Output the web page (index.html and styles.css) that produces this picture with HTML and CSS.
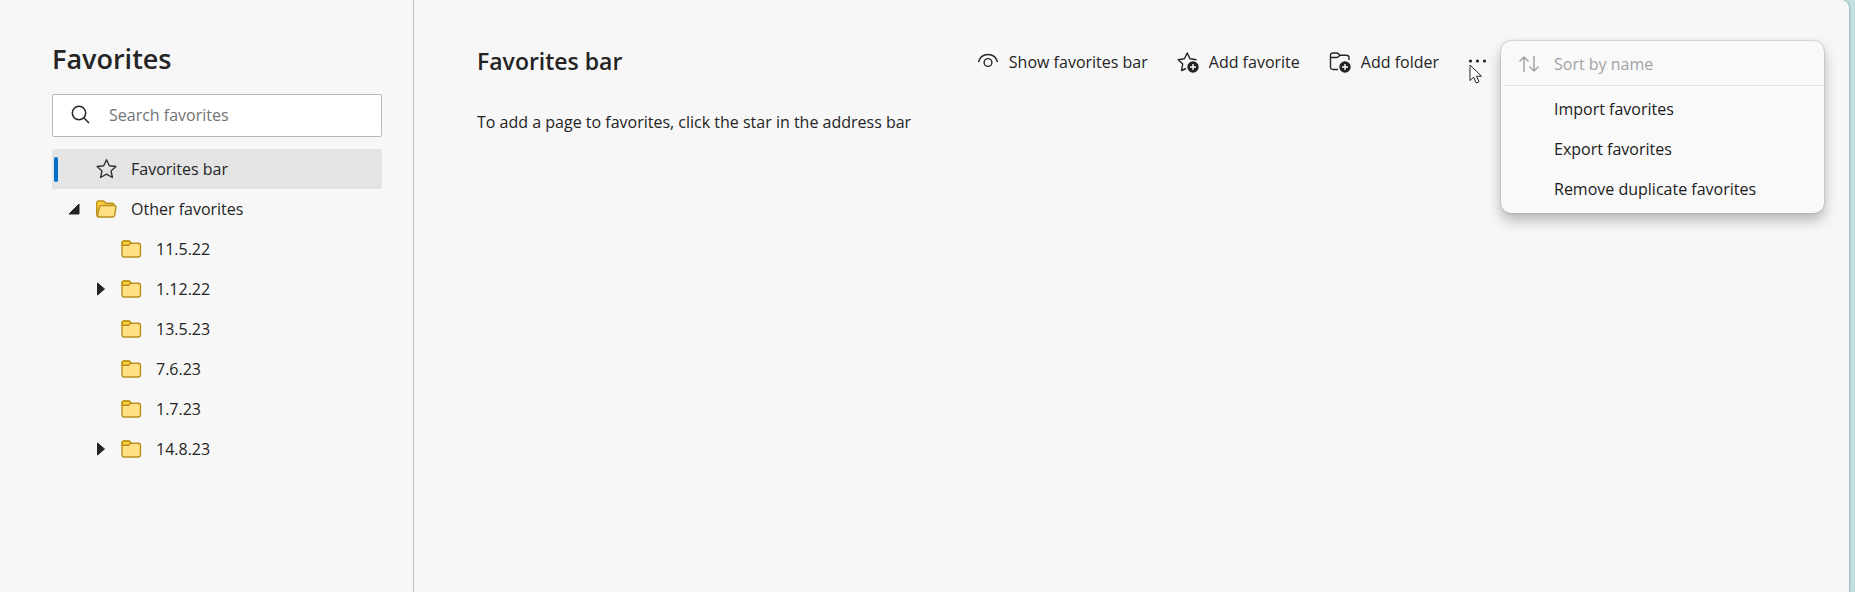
FILE: index.html
```html
<!DOCTYPE html>
<html lang="en">
<head>
<meta charset="utf-8">
<title>Favorites</title>
<link rel="stylesheet" href="styles.css">
</head>
<body>

<!-- shared icons -->
<svg class="sprite" aria-hidden="true">
  <symbol id="folder" viewBox="0 0 22 20">
    <path d="M2 4.500Q2 2 4.500 2H8q1.200 0 2 .8l1.300 1.400H18q2.500 0 2.500 2.500V15.500q0 2.500-2.500 2.500H4.500Q2 18 2 15.500z" fill="#ffe083" stroke="#b8901c" stroke-width="1.400"/>
    <path d="M2 6.200V4.500Q2 2 4.500 2H8q1.200 0 2 .8l.9 1-1.300 1.500q-.7.900-2 .9z" fill="#ffcd3c" stroke="#b8901c" stroke-width="1.400" stroke-linejoin="round"/>
  </symbol>
  <symbol id="plus" viewBox="0 0 12 12">
    <circle cx="6" cy="6" r="5.700" fill="#222" stroke="none"/>
    <path d="M6 3v6M3 6h6" stroke="#fff" stroke-width="1.400"/>
  </symbol>
</svg>

<div class="page">
<aside class="sidebar">
  <h1>Favorites</h1>
  <label class="search">
    <svg width="20" height="20" viewBox="0 0 20 20"><circle cx="8" cy="8" r="6.700"/><path d="M12.800 12.800L18 18"/></svg>
    <input type="search" placeholder="Search favorites" aria-label="Search favorites">
  </label>

  <ul class="tree">
    <li><button class="row selected">
      <span class="arrow"></span>
      <svg class="star" width="22" height="22" viewBox="0 0 22 22"><path d="M11.500 1.700l2.800 6 6.600.8-4.900 4.400 1.400 6.600-5.900-3.300-5.900 3.300 1.400-6.600-4.900-4.400 6.600-.8z"/></svg>
      Favorites bar
    </button></li>
    <li><button class="row">
      <span class="arrow"><svg width="12" height="12" viewBox="0 0 12 12"><path d="M11 1v10H1z"/></svg></span>
      <svg width="22" height="20" viewBox="0 0 22 20" fill="#ffcd3c" stroke="#b8901c" stroke-width="1.400" stroke-linejoin="round"><path d="M3.700 18Q1.700 17.500 1.700 15.500V4.500Q1.700 2 4 2h3.700q1 0 1.700.7l1.500 1.500h6.200q2 0 2 2.300"/><path d="M7 6.500h12.300q1.900 0 1.600 1.900l-1.200 7.700q-.3 1.900-2.200 1.900H3.700q-1.400-.1-1.100-1.700L4.400 8.200q.3-1.700 2.600-1.700z" fill="#ffe083"/></svg>
      Other favorites
    </button>
      <ul>
        <li><button class="row"><span class="arrow"></span><svg width="22" height="20"><use href="#folder"/></svg>11.5.22</button></li>
        <li><button class="row"><span class="arrow"><svg width="8" height="14" viewBox="0 0 8 14"><path d="M.5 1L7.500 7l-7 6z"/></svg></span><svg width="22" height="20"><use href="#folder"/></svg>1.12.22</button></li>
        <li><button class="row"><span class="arrow"></span><svg width="22" height="20"><use href="#folder"/></svg>13.5.23</button></li>
        <li><button class="row"><span class="arrow"></span><svg width="22" height="20"><use href="#folder"/></svg>7.6.23</button></li>
        <li><button class="row"><span class="arrow"></span><svg width="22" height="20"><use href="#folder"/></svg>1.7.23</button></li>
        <li><button class="row"><span class="arrow"><svg width="8" height="14" viewBox="0 0 8 14"><path d="M.5 1L7.500 7l-7 6z"/></svg></span><svg width="22" height="20"><use href="#folder"/></svg>14.8.23</button></li>
      </ul>
    </li>
  </ul>
</aside>

<main class="content">
  <header class="topbar">
    <h2>Favorites bar</h2>
    <div class="tools">
      <button>
        <svg width="22" height="22" viewBox="0 0 22 22"><path d="M1.500 11C2.800 6.300 6.300 3.500 11 3.500s8.200 2.800 9.500 7.500"/><circle cx="11" cy="11.500" r="3.900"/></svg>
        Show favorites bar
      </button>
      <button>
        <svg width="22" height="22" viewBox="0 0 22 22"><path d="M9 17.500l-4.500 2 1.200-6.400L1.200 8.700l6.200-.9L10.200 2l2.800 5.800 6.500.9"/><use href="#plus" x="10" y="10" width="12" height="12"/></svg>
        Add favorite
      </button>
      <button>
        <svg width="22" height="22" viewBox="0 0 22 22"><path d="M9 18.500H4q-2.500 0-2.500-2.500V4.500Q1.500 2 4 2h3.500q1.200 0 2 .8L11 4.300h6.500Q20 4.300 20 6.800V9M1.500 6.500h5.800q1.200 0 2-.8L11 4.300"/><use href="#plus" x="10" y="10" width="12" height="12"/></svg>
        Add folder
      </button>
      <button class="more" aria-label="More options">
        <svg width="20" height="20" viewBox="0 0 20 20"><circle cx="2.500" cy="9" r="1.600"/><circle cx="9.500" cy="9" r="1.600"/><circle cx="16.500" cy="9" r="1.600"/></svg>
      </button>
    </div>
  </header>
  <p>To add a page to favorites, click the star in the address bar</p>

  <div class="menu">
    <button disabled>
      <svg width="22" height="18" viewBox="0 0 22 18"><path d="M6 17V2M1.500 6.500L6 2l4.500 4.500M16 1v15M11.500 11.500L16 16l4.500-4.500"/></svg>
      Sort by name
    </button>
    <hr>
    <button>Import favorites</button>
    <button>Export favorites</button>
    <button>Remove duplicate favorites</button>
  </div>

  <svg class="cursor" width="14" height="21" viewBox="0 0 14 21"><path d="M1 1v15.500l3.700-3.300 2.500 5.800 2.800-1.200-2.500-5.600h5z"/></svg>
</main>
</div>

</body>
</html>
```

FILE: styles.css
```css
* {
  box-sizing: border-box;
}
body {
  margin: 0;
  background: #c3dfe0;
  color: #242424;
  font-family: "Open Sans", "Noto Sans", sans-serif;
  font-size: 16px;
  line-height: 24px;
}
h1, h2, p, ul {
  margin: 0;
  padding: 0;
}
ul {
  list-style: none;
}
button, input {
  font: inherit;
  color: inherit;
  border: none;
  background: none;
  padding: 0;
}
svg {
  flex-shrink: 0;
}
.sprite {
  position: absolute;
  width: 0;
  height: 0;
}
.page {
  display: flex;
  min-height: 100vh;
  margin-right: 6px;
  background: #f7f7f7;
  border-top-right-radius: 8px;
  box-shadow: 1px 0 2px #9fb5b6;
}

/* sidebar */
.sidebar {
  width: 414px;
  flex-shrink: 0;
  padding: 41px 31px 40px 52px;
  border-right: 1px solid #bdbdbd;
}
h1 {
  font-size: 27px;
  font-weight: 600;
  line-height: 36px;
}
.search {
  display: flex;
  align-items: center;
  gap: 18px;
  height: 43px;
  margin: 17px 0 12px;
  padding: 0 18px 2px;
  background: #fff;
  border: 1px solid #b8b8b8;
  border-radius: 2px;
}
.search svg {
  fill: none;
  stroke: #242424;
  stroke-width: 1.5;
}
.search input {
  flex: 1;
  min-width: 0;
  outline: none;
}
.search input::placeholder {
  color: #737373;
}
.row {
  display: flex;
  align-items: center;
  width: 100%;
  height: 40px;
  border-radius: 2px;
  text-align: left;
}
.row > svg {
  margin-right: 14px;
}
.row.selected {
  background: #e4e4e4;
}
.row.selected::before {
  content: "";
  width: 4px;
  height: 25px;
  margin: 0 -6px 0 2px;
  border-radius: 2px;
  background: #0070c6;
}
.arrow {
  display: flex;
  justify-content: center;
  width: 43px;
}
.arrow svg {
  fill: #242424;
  stroke: #242424;
  stroke-linejoin: round;
}
.tree ul .row {
  padding-left: 25px;
}
.tree ul .arrow {
  padding-left: 5px;
}
.star {
  fill: none;
  stroke: #333;
  stroke-width: 1.4;
  stroke-linejoin: round;
}

/* content */
.content {
  position: relative;
  flex: 1;
  padding: 42px 24px 40px 63px;
}
.topbar {
  display: flex;
  align-items: center;
  justify-content: space-between;
  padding-right: 337px;
}
h2 {
  padding-bottom: 2px;
  font-size: 23px;
  font-weight: 600;
  line-height: 38px;
}
.tools {
  display: flex;
  gap: 29px;
}
.tools button {
  display: flex;
  align-items: center;
  gap: 10px;
}
.tools svg {
  fill: none;
  stroke: #242424;
  stroke-width: 1.4;
  stroke-linejoin: round;
}
.tools .more svg {
  fill: #242424;
  stroke: none;
}
.content p {
  margin-top: 28px;
}

.menu {
  position: absolute;
  top: 41px;
  right: 25px;
  width: 323px;
  padding: 1px 0 4px;
  background: #f9f9f9;
  border-radius: 10px;
  box-shadow: 0 0 2px #999, 0 7px 14px rgba(0, 0, 0, .28);
}
.menu button {
  display: flex;
  align-items: center;
  width: 100%;
  height: 40px;
  padding-left: 53px;
  color: #1b1b1b;
}
.menu button:disabled {
  height: 43px;
  gap: 14px;
  padding-left: 17px;
  color: #a3a3a3;
}
.menu svg {
  fill: none;
  stroke: #a3a3a3;
  stroke-width: 1.5;
}
.menu hr {
  margin: 0 0 3px 3px;
  border: 0;
  border-top: 1px solid #e3e3e3;
}
.cursor {
  position: absolute;
  top: 64px;
  right: 366px;
  fill: #fff;
  stroke: #222;
}
```
